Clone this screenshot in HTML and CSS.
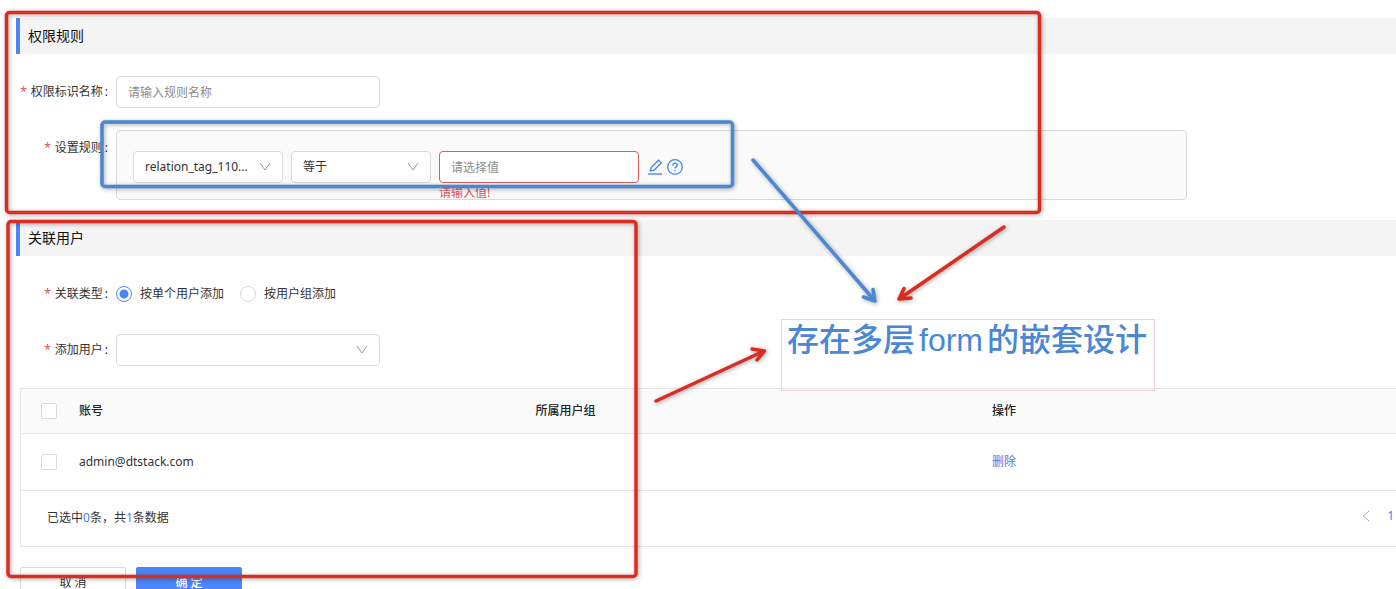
FILE: index.html
```html
<!DOCTYPE html>
<html lang="zh-CN">

<head>
    <meta charset="UTF-8">
    <meta name="viewport" content="width=device-width, initial-scale=1.0">
    <title>权限规则</title>
    <link rel="stylesheet" href="styles.css">
</head>

<body>
    <main class="page">
        <section class="section">
            <h2 class="section-title">权限规则</h2>
            <div class="form">
                <div class="form-row">
                    <label class="form-label" for="rule-name">权限标识名称</label>
                    <input class="control control-wide" id="rule-name" type="text" placeholder="请输入规则名称">
                </div>
                <div class="form-row">
                    <label class="form-label form-label-box" for="rule-tag">设置规则</label>
                    <div class="rule-box">
                        <div class="rule-line">
                            <div class="select-wrap select-tag">
                                <select class="control" id="rule-tag">
                                    <option>relation_tag_110...</option>
                                </select>
                                <svg class="arrow" viewBox="0 0 12 12"><path d="M1 2 6 9l5-7"/></svg>
                            </div>
                            <div class="select-wrap select-op">
                                <select class="control" aria-label="条件">
                                    <option>等于</option>
                                </select>
                                <svg class="arrow" viewBox="0 0 12 12"><path d="M1 2 6 9l5-7"/></svg>
                            </div>
                            <input class="control control-value has-error" type="text" placeholder="请选择值" aria-label="值">
                            <div class="rule-icons">
                                <button class="icon-btn" type="button" aria-label="编辑">
                                    <svg viewBox="0 0 16 16">
                                        <path d="M1 15h14"/>
                                        <path d="M3.500 12l.7-3.500 7.300-7.300 2.700 2.700-7.200 7.300z"/>
                                    </svg>
                                </button>
                                <button class="icon-btn" type="button" aria-label="帮助">
                                    <svg viewBox="0 0 16 16">
                                        <circle cx="8" cy="8" r="7.300"/>
                                        <path d="M5.800 6.400C5.800 5 6.700 4.200 8 4.200s2.200.8 2.200 2c0 1.700-2.200 1.600-2.200 3.300"/>
                                        <circle class="dot" cx="8" cy="11.500" r=".8"/>
                                    </svg>
                                </button>
                            </div>
                        </div>
                        <p class="error-text">请输入值!</p>
                    </div>
                </div>
            </div>
        </section>

        <section class="section">
            <h2 class="section-title">关联用户</h2>
            <div class="form form-users">
                <div class="form-row">
                    <span class="form-label" id="type-label">关联类型</span>
                    <div class="radio-group" role="radiogroup" aria-labelledby="type-label">
                        <label class="radio"><input type="radio" name="type" checked>按单个用户添加</label>
                        <label class="radio"><input type="radio" name="type">按用户组添加</label>
                    </div>
                </div>
                <div class="form-row">
                    <label class="form-label" for="add-user">添加用户</label>
                    <div class="select-wrap control-wide">
                        <select class="control" id="add-user">
                            <option></option>
                        </select>
                        <svg class="arrow" viewBox="0 0 12 12"><path d="M1 2 6 9l5-7"/></svg>
                    </div>
                </div>
            </div>

            <div class="table-wrap">
                <table class="user-table">
                    <thead>
                        <tr>
                            <th class="col-check"><input type="checkbox" aria-label="全选"></th>
                            <th class="col-main">账号</th>
                            <th class="col-main">所属用户组</th>
                            <th>操作</th>
                        </tr>
                    </thead>
                    <tbody>
                        <tr>
                            <td class="col-check"><input type="checkbox" aria-label="选择"></td>
                            <td>admin@dtstack.com</td>
                            <td></td>
                            <td><a href="#">删除</a></td>
                        </tr>
                    </tbody>
                </table>
                <div class="table-footer">
                    <span>已选中<b>0</b>条，共<b>1</b>条数据</span>
                    <nav class="pager">
                        <button class="pager-prev" type="button" aria-label="上一页">
                            <svg viewBox="0 0 8 12"><path d="M7 1 1 6l6 5"/></svg>
                        </button>
                        <a href="#">1</a>
                    </nav>
                </div>
            </div>

            <div class="actions">
                <button class="btn" type="button">取 消</button>
                <button class="btn btn-primary" type="button">确 定</button>
            </div>
        </section>
    </main>

    <!-- Markup drawn over the form -->
    <svg class="marks" width="1396" height="589" viewBox="0 0 1396 589">
        <g class="mark-red">
            <rect x="6.500" y="12.500" width="1033" height="200" rx="3"/>
            <rect x="8" y="221.500" width="628" height="355" rx="3"/>
            <path d="M1004 227 899 299M904 288.500 899 299l12-1"/>
            <path d="M656 401 764 351M752 349l12.500 2-7.500 9"/>
        </g>
        <g class="mark-blue">
            <rect x="102" y="122" width="630.500" height="64.500" rx="3"/>
            <path d="M753 160 875 301M863.500 297l11.500 4-2-11.500"/>
        </g>
    </svg>
    <div class="note">存在多层<span class="note-word">form</span>的嵌套设计</div>
</body>

</html>
```

FILE: styles.css
```css
* {
    box-sizing: border-box;
}

body {
    margin: 0;
    height: 100vh;
    overflow: hidden;
    position: relative;
    background: #fff;
    color: #333;
    font-family: "Noto Sans", "Noto Sans CJK SC", sans-serif;
    font-size: 12px;
    line-height: 16px;
}

input,
select,
button {
    font: inherit;
    color: inherit;
    margin: 0;
}

svg {
    display: block;
    fill: none;
    stroke: currentColor;
}

a {
    color: #3f7ef0;
    text-decoration: none;
}

.page {
    padding: 18px 0 0 16px;
}

.section {
    margin-bottom: 20px;
}

.section-title {
    margin: 0;
    padding-left: 8px;
    border-left: 4px solid #4a86f7;
    background: #f4f4f4;
    color: #111;
    font-size: 14px;
    font-weight: 400;
    line-height: 36px;
}

.form {
    display: flex;
    flex-direction: column;
    gap: 22px;
    padding-top: 22px;
}

.form-users {
    gap: 24px;
}

.form-row {
    display: flex;
}

.form-label {
    width: 100px;
    padding-right: 8px;
    text-align: right;
    line-height: 32px;
    flex-shrink: 0;
}

.form-label-box {
    padding-top: 2px;
}

.form-label::before {
    content: "*";
    margin-right: 4px;
    color: #e0524f;
}

.form-label::after {
    content: ":";
    margin-left: 2px;
}

.control {
    width: 100%;
    height: 32px;
    padding: 0 11px;
    border: 1px solid #d9d9d9;
    border-radius: 4px;
    background: #fff;
    appearance: none;
    outline: none;
}

.control::placeholder {
    color: #8c8c8c;
    opacity: 1;
}

.control-wide {
    width: 264px;
}

.control-value {
    width: 200px;
}

.has-error {
    border-color: #dc5b5b;
}

.select-wrap {
    position: relative;
}

.select-tag {
    width: 150px;
}

.select-op {
    width: 140px;
}

.arrow {
    position: absolute;
    top: 10px;
    right: 12px;
    width: 12px;
    height: 12px;
    color: #999;
    pointer-events: none;
}

.rule-box {
    width: 1071px;
    max-width: 100%;
    padding: 20px 16px 0;
    border: 1px solid #d9d9d9;
    border-radius: 4px;
    background: #fafafa;
}

.rule-line {
    display: flex;
    align-items: center;
    gap: 8px;
}

.rule-icons {
    display: flex;
    gap: 4px;
}

.icon-btn,
.pager-prev {
    padding: 0;
    border: 0;
    background: none;
    cursor: pointer;
}

.icon-btn {
    width: 16px;
    height: 16px;
    color: #3f85e2;
}

.icon-btn svg {
    stroke-width: 1.3;
}

.icon-btn .dot {
    fill: currentColor;
    stroke: none;
}

.error-text {
    margin: 0 0 -4px;
    padding-left: 306px;
    color: #e0524f;
    line-height: 20px;
}

.radio-group {
    display: flex;
    gap: 16px;
}

.radio {
    display: flex;
    align-items: center;
    gap: 8px;
}

.radio input {
    width: 16px;
    height: 16px;
    border: 1px solid #d9d9d9;
    border-radius: 50%;
    appearance: none;
}

.radio input:checked {
    border-color: #4a86f7;
    background: radial-gradient(circle, #4a86f7 4px, #fff 5px);
}

.table-wrap {
    margin: 22px 0 0 4px;
    border: 1px solid #e6e6e6;
    border-right: 0;
}

.user-table {
    width: 100%;
    border-collapse: collapse;
    table-layout: fixed;
}

.user-table th,
.user-table td {
    padding: 0 16px;
    border-bottom: 1px solid #e6e6e6;
    text-align: left;
}

.user-table th {
    height: 44px;
    background: #fafafa;
    font-weight: 500;
    color: #222;
}

.user-table td {
    height: 57px;
}

.user-table .col-check {
    width: 42px;
    padding: 0 0 0 20px;
}

.col-main {
    width: 33.2%;
}

.user-table input {
    display: block;
    width: 16px;
    height: 16px;
    border: 1px solid #d9d9d9;
    border-radius: 2px;
    background: #fff;
    appearance: none;
}

.table-footer {
    display: flex;
    align-items: center;
    justify-content: space-between;
    height: 55px;
    padding: 0 2px 0 26px;
}

.table-footer b {
    color: #3f7ef0;
    font-weight: 400;
}

.pager {
    display: flex;
    align-items: center;
    gap: 17px;
    padding-bottom: 4px;
}

.pager-prev {
    color: #aaa;
}

.pager-prev svg {
    width: 8px;
    height: 12px;
}

.actions {
    display: flex;
    gap: 10px;
    padding: 20px 0 20px 4px;
}

.btn {
    width: 106px;
    height: 32px;
    border: 1px solid #d9d9d9;
    border-radius: 2px;
    background: #fff;
}

.btn-primary {
    border-color: #4a86f7;
    background: #4a86f7;
    color: #fff;
    font-weight: 500;
}

.marks {
    position: absolute;
    top: 0;
    left: 0;
    stroke-width: 3.5;
    stroke-linecap: round;
    stroke-linejoin: round;
    filter: drop-shadow(1px 1px 2px rgba(0, 0, 0, 0.35));
    pointer-events: none;
}

.mark-red {
    stroke: #dc2c22;
}

.mark-blue {
    stroke: #4a87d5;
}

.note {
    position: absolute;
    top: 319px;
    left: 781px;
    width: 374px;
    height: 72px;
    padding-left: 5px;
    border: 1px solid #f3d0d3;
    color: #4a87d5;
    font-family: "Liberation Sans", "Noto Sans CJK SC", sans-serif;
    font-size: 32px;
    font-weight: 500;
    line-height: 40px;
    white-space: nowrap;
}

.note-word {
    margin: 0 4px;
}
```
